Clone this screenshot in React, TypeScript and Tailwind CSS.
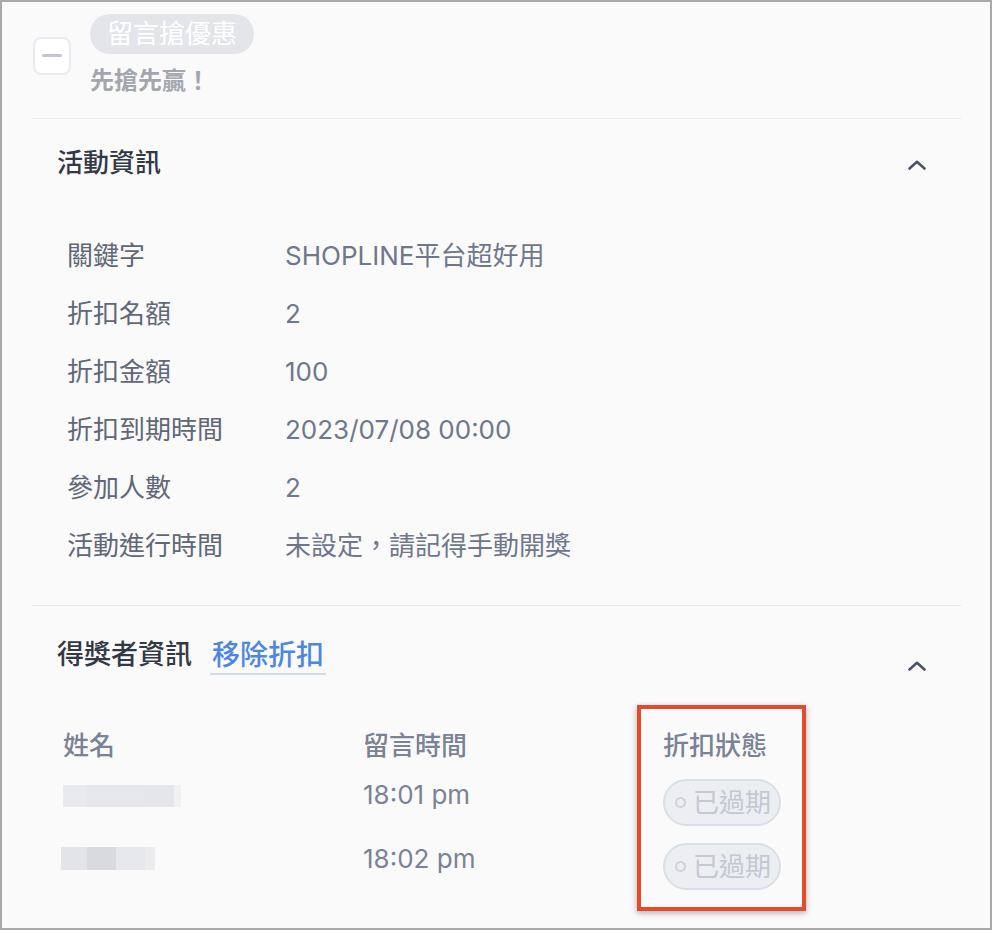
const font = { fontFamily: '"Inter", "Noto Sans CJK TC", sans-serif' };

const Chevron = ({ className }: { className?: string }) => (
  <svg width="18" height="10" viewBox="0 0 18 10" fill="none" className={className}>
    <polyline points="1.5,8.5 9,1.8 16.5,8.5" stroke="#4b5469" strokeWidth="2.6" strokeLinecap="round" strokeLinejoin="round" />
  </svg>
);

const info = [
  ["關鍵字", "SHOPLINE平台超好用"],
  ["折扣名額", "2"],
  ["折扣金額", "100"],
  ["折扣到期時間", "2023/07/08 00:00"],
  ["參加人數", "2"],
  ["活動進行時間", "未設定，請記得手動開獎"],
];

const ExpiredPill = () => (
  <div className="flex h-[47px] w-[118px] items-center gap-[7px] rounded-full border-2 border-[#d9dfe7] bg-[#eceef2] pl-[10px]">
    <span className="h-[11px] w-[11px] rounded-full border-2 border-[#cdd3dc]" />
    <span className="text-[26px] leading-none text-[#c3c9d3]">已過期</span>
  </div>
);

export default function App() {
  return (
    <div
      className="relative box-border h-[930px] w-full overflow-hidden border-2 border-[#a9a9a9] bg-[#fafafa]"
      style={font}
    >
      <div className="ml-[30px] mr-[29px]">
        {/* campaign title */}
        <div className="flex items-center gap-[19px] border-b border-[#e6e9ee] pb-[21px] pt-[12px]">
          <div className="ml-px flex h-[38px] w-[38px] items-center justify-center rounded-[8px] border-2 border-[#e8ecf2] bg-white">
            <span className="h-[3px] w-[20px] rounded-full bg-[#c3c6cd]" />
          </div>
          <div>
            <div className="inline-flex h-[40px] items-center rounded-full bg-[#e3e5ea] px-[17px] text-[26px] leading-none text-white">
              留言搶優惠
            </div>
            <div className="mt-[11px] text-[24px] font-bold leading-[32px] text-[#a4a6ad]">先搶先贏！</div>
          </div>
        </div>

        {/* activity info */}
        <div className="border-b border-[#e6e9ee] pb-[31px] pt-[28px]">
          <div className="flex items-start justify-between pl-[25px] pr-[35px]">
            <h2 className="text-[26px] font-medium leading-[32px] text-[#333845]">活動資訊</h2>
            <Chevron className="mt-[13px]" />
          </div>
          <div className="mt-[47px] pl-[35px]">
            {info.map(([label, value]) => (
              <div key={label} className="flex h-[58px] items-center text-[26px]">
                <span className="w-[218px] text-[#606777]">{label}</span>
                <span className="text-[#6f778a]">{value}</span>
              </div>
            ))}
          </div>
        </div>

        {/* winners */}
        <div className="pt-[33px]">
          <div className="flex items-start justify-between pl-[25px] pr-[35px]">
            <div className="flex items-start gap-[18px]">
              <h2 className="text-[27px] font-medium leading-[32px] text-[#333845]">得獎者資訊</h2>
              <a className="border-b-2 border-[#d5dce6] px-[2px] pb-[2px] text-[28px] font-medium leading-[32px] text-[#4f86e0]">
                移除折扣
              </a>
            </div>
            <Chevron className="mt-[22px]" />
          </div>

          <div className="ml-[31px] mt-[55px] grid grid-cols-[300px_300px_300px] text-[26px]">
            <div className="font-medium leading-[32px] text-[#7a8295]">姓名</div>
            <div className="font-medium leading-[32px] text-[#7a8295]">留言時間</div>
            <div className="font-medium leading-[32px] text-[#7a8295]">折扣狀態</div>

            <div className="mt-[17px] flex h-[47px] pt-[6px]">
              <div className="flex h-[22px]">
                <span className="w-[24px] bg-[#e9eaed]" />
                <span className="w-[58px] bg-[#e6e7ea]" />
                <span className="w-[29px] bg-[#e5e6ea]" />
                <span className="w-[7px] bg-[#f0f1f3]" />
              </div>
            </div>
            <div className="mt-[17px] leading-[32px] text-[#7a8295]">18:01 pm</div>
            <div className="mt-[17px]">
              <ExpiredPill />
            </div>

            <div className="mt-[17px] flex h-[47px] pt-[4px]">
              <div className="-ml-[2px] flex h-[23px]">
                <span className="w-[26px] bg-[#e3e4e8]" />
                <span className="w-[29px] bg-[#d9dadf]" />
                <span className="w-[29px] bg-[#e6e7ea]" />
                <span className="w-[10px] bg-[#ececee]" />
              </div>
            </div>
            <div className="mt-[17px] leading-[32px] text-[#7a8295]">18:02 pm</div>
            <div className="mt-[17px]">
              <ExpiredPill />
            </div>
          </div>
        </div>
      </div>

      {/* highlight annotation */}
      <div className="pointer-events-none absolute left-[635px] top-[703px] h-[206px] w-[169px] border-4 border-[#e64a2e] shadow-[0_2px_6px_rgba(0,0,0,0.3)]" />
    </div>
  );
}
